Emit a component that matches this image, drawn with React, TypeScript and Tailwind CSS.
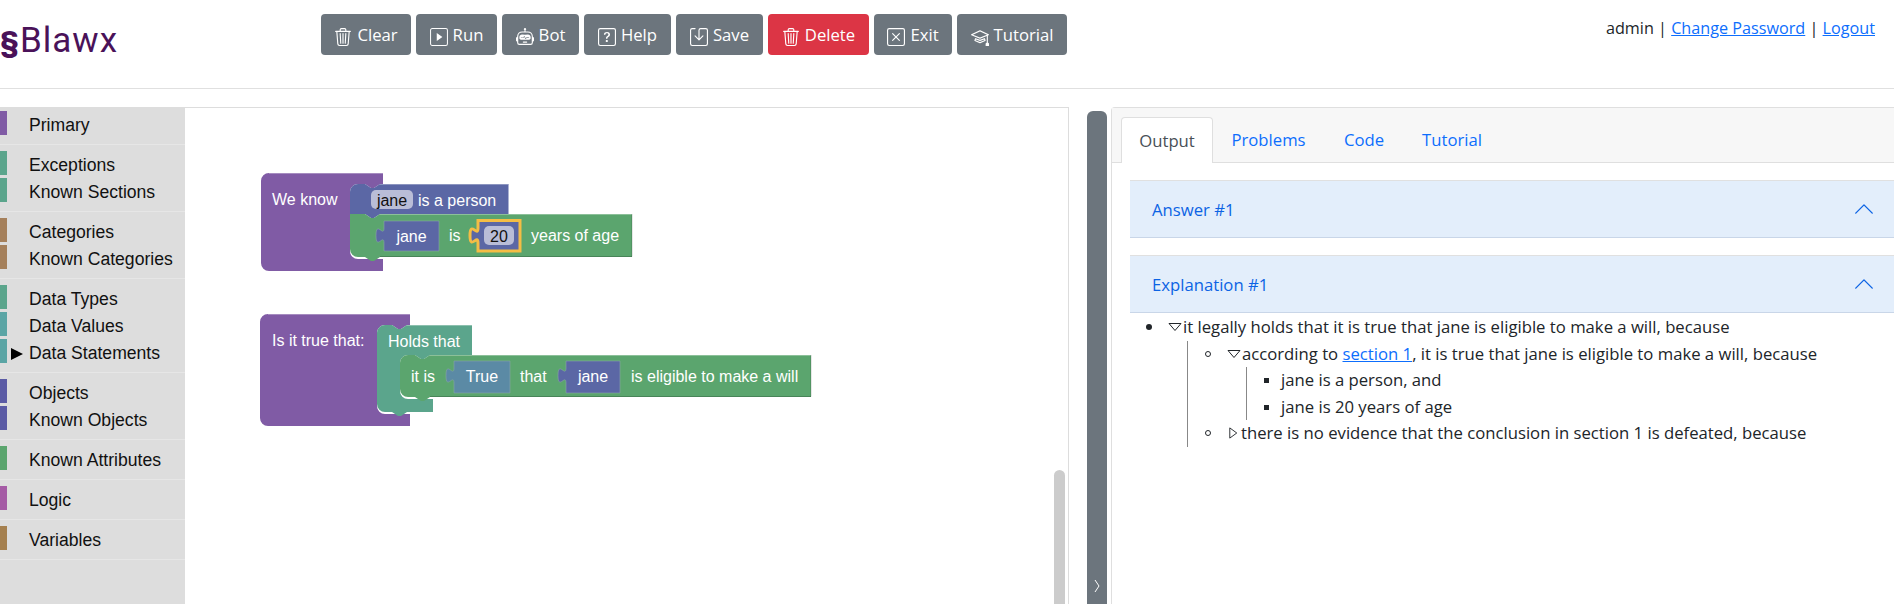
import { BsChevronUp, BsMortarboard, BsQuestionSquare, BsRobot, BsSave, BsTrash3, BsXSquare } from 'react-icons/bs';
import type { ReactNode } from 'react';

function RunIcon() {
  return (
    <svg viewBox="0 0 16 16" className="h-[18px] w-[18px]" fill="none">
      <rect x="0.5" y="0.5" width="15" height="15" rx="1.5" stroke="currentColor" strokeWidth="0.9" />
      <path d="M6 4.5 11 8 6 11.5z" fill="currentColor" />
    </svg>
  );
}

const buttons = [
  { label: 'Clear', icon: <BsTrash3 size={18} />, cls: 'w-[90px] bg-[#6c757d]' },
  { label: 'Run', icon: <RunIcon />, cls: 'w-[81px] bg-[#6c757d]' },
  { label: 'Bot', icon: <BsRobot size={18} />, cls: 'w-[77px] bg-[#6c757d]' },
  { label: 'Help', icon: <BsQuestionSquare size={18} />, cls: 'w-[87px] bg-[#6c757d]' },
  { label: 'Save', icon: <BsSave size={18} />, cls: 'w-[87px] bg-[#6c757d]' },
  { label: 'Delete', icon: <BsTrash3 size={18} />, cls: 'w-[101px] bg-[#dc3545]' },
  { label: 'Exit', icon: <BsXSquare size={18} />, cls: 'w-[78px] bg-[#6c757d]' },
  { label: 'Tutorial', icon: <BsMortarboard size={18} />, cls: 'w-[110px] bg-[#6c757d]' },
];

const toolbox = [
  [{ name: 'Primary', color: 'bg-[#805ba5]' }],
  [
    { name: 'Exceptions', color: 'bg-[#5ba58c]' },
    { name: 'Known Sections', color: 'bg-[#5ba58c]' },
  ],
  [
    { name: 'Categories', color: 'bg-[#a5805b]' },
    { name: 'Known Categories', color: 'bg-[#a5805b]' },
  ],
  [
    { name: 'Data Types', color: 'bg-[#5ba58c]' },
    { name: 'Data Values', color: 'bg-[#5ba5a5]' },
    { name: 'Data Statements', color: 'bg-[#5ba5a5]', selected: true },
  ],
  [
    { name: 'Objects', color: 'bg-[#5b5ba5]' },
    { name: 'Known Objects', color: 'bg-[#5b5ba5]' },
  ],
  [{ name: 'Known Attributes', color: 'bg-[#5ba56e]' }],
  [{ name: 'Logic', color: 'bg-[#a55ba5]' }],
  [{ name: 'Variables', color: 'bg-[#a5804f]' }],
];

function Toolbox() {
  return (
    <div className="w-[185px] shrink-0 bg-[#dddddd] font-['Liberation_Sans',sans-serif] text-[17.6px] text-[#111]">
      {toolbox.map((group, i) => (
        <div key={i} className={`flex flex-col gap-[3px] border-b border-[#e6e6e6] pb-[9px] ${i === 0 ? 'pt-[4px]' : 'pt-[6px]'}`}>
          {group.map((item) => (
            <div key={item.name} className="flex h-[24px] items-center">
              <div className={`h-full w-[7px] ${item.color}`} />
              <div className="flex w-[22px] justify-end pr-[6px]">
                {'selected' in item && (
                  <svg viewBox="0 0 12 12" className="mt-[5px] h-3 w-3 fill-black">
                    <path d="M0 0 12 6 0 12z" />
                  </svg>
                )}
              </div>
              <span className="mt-[5px] whitespace-nowrap">{item.name}</span>
            </div>
          ))}
        </div>
      ))}
    </div>
  );
}

const textCls = "font-['Liberation_Sans',sans-serif] text-[16px] fill-white";

// value block with the puzzle tab on its left side
function ValueBlock({ x, y, w, h, fill, label }: { x: number; y: number; w: number; h: number; fill: string; label: string }) {
  return (
    <g>
      <path
        d={`M${x},${y} H${x + w} V${y + h} H${x} V${y + 22} c0,-10 -8,8 -8,-7.5 s8,2.5 8,-7.5 z`}
        fill={fill}
        stroke="#8aa3a8"
        strokeOpacity="0.6"
      />
      <text x={x + w / 2} y={y + 21} textAnchor="middle" className={textCls}>
        {label}
      </text>
    </g>
  );
}

function Edge({ d, light }: { d: string; light?: boolean }) {
  return <path d={d} fill="none" stroke={light ? '#ffffff' : '#000000'} strokeOpacity={light ? 0.3 : 0.2} />;
}

function Workspace() {
  return (
    <div className="relative h-full w-[884px] shrink-0 border-r border-t border-[#dddddd] bg-white">
      <svg viewBox="185 108 883 496" className="h-[496px] w-[883px]">
        {/* We know */}
        <path
          d="M269,173 H383 V184 H380 l-6,4 -3,0 -6,-4 H358 a8,8 0 0 0 -8,8 V251 a8,8 0 0 0 8,8 H383 V271 H269 a8,8 0 0 1 -8,-8 V181 a8,8 0 0 1 8,-8 z"
          fill="#805ba5"
        />
        <Edge light d="M269,173.5 H383" />
        <text x="272" y="205" className={textCls}>We know</text>
        <path
          d="M350,192 a8,8 0 0 1 8,-8 H365 l6,4 3,0 6,-4 H508.5 V214 H380 l-6,4 -3,0 -6,-4 H350 z"
          fill="#5b67a5"
        />
        <Edge light d="M380,184.5 H508" />
        <rect x="371" y="190" width="42" height="19" rx="5" fill="#b9bdd7" />
        <text x="392" y="206" textAnchor="middle" className="font-['Liberation_Sans',sans-serif] text-[16px] fill-[#111]">jane</text>
        <text x="418" y="206" className={textCls}>is a person</text>
        <path
          d="M350,214 H365 l6,4 3,0 6,-4 H632 V257 H380 l-6,4 -3,0 -6,-4 H358 a8,8 0 0 1 -8,-8 z"
          fill="#5ba56e"
        />
        <Edge light d="M380,214.5 H632" />
        <Edge d="M380,256.5 H632 V214" />
        <ValueBlock x={384} y={221} w={55} h={30} fill="#5b67a5" label="jane" />
        <text x="449" y="241" className={textCls}>is</text>
        <path
          d="M478,220.5 H520 V251 H478 V243 c0,-10 -8,8 -8,-7.5 s8,2.5 8,-7.5 z"
          fill="#5b67a5"
          stroke="#f4bd45"
          strokeWidth="3"
        />
        <rect x="484" y="226" width="30" height="19" rx="5" fill="#b9bdd7" />
        <text x="499" y="242" textAnchor="middle" className="font-['Liberation_Sans',sans-serif] text-[16px] fill-[#111]">20</text>
        <text x="531" y="241" className={textCls}>years of age</text>

        {/* Is it true that */}
        <path
          d="M268,314 H410 V325 H407 l-6,4 -3,0 -6,-4 H385 a8,8 0 0 0 -8,8 V406 a8,8 0 0 0 8,8 H410 V426 H268 a8,8 0 0 1 -8,-8 V322 a8,8 0 0 1 8,-8 z"
          fill="#805ba5"
        />
        <Edge light d="M268,314.5 H410" />
        <text x="272" y="346" className={textCls}>Is it true that:</text>
        <path
          d="M377,333 a8,8 0 0 1 8,-8 H392 l6,4 3,0 6,-4 H472 V355 H430 l-6,4 -3,0 -6,-4 H408 a8,8 0 0 0 -8,8 V391 a8,8 0 0 0 8,8 H433 V412 H407 l-6,4 -3,0 -6,-4 H385 a8,8 0 0 1 -8,-8 z"
          fill="#5ba58c"
        />
        <Edge light d="M407,325.5 H472" />
        <text x="388" y="347" className={textCls}>Holds that</text>
        <path
          d="M400,363 a8,8 0 0 1 8,-8 H415 l6,4 3,0 6,-4 H811 V397 H430 l-6,4 -3,0 -6,-4 H408 a8,8 0 0 1 -8,-8 z"
          fill="#5ba56e"
        />
        <Edge light d="M430,355.5 H811" />
        <Edge d="M430,396.5 H811 V355" />
        <text x="411" y="382" className={textCls}>it is</text>
        <ValueBlock x={454} y={361} w={56} h={32} fill="#5b8aa5" label="True" />
        <text x="520" y="382" className={textCls}>that</text>
        <ValueBlock x={566} y={361} w={54} h={32} fill="#5b67a5" label="jane" />
        <text x="631" y="382" className={textCls}>is eligible to make a will</text>
      </svg>
      {/* workspace scrollbar */}
      <div className="absolute bottom-0 right-[3px] top-[362px] w-[11px] rounded-t-[6px] bg-[#cccccc]" />
    </div>
  );
}

function Closed() {
  return (
    <svg viewBox="0 0 14 14" className="mr-[1px] inline-block h-[14px] w-[13px] align-[-1px]" fill="none" stroke="currentColor">
      <path d="M3 1.5 10.5 7 3 12.5z" />
    </svg>
  );
}

function Open() {
  return (
    <svg viewBox="0 0 14 14" className="mr-[1px] inline-block h-[14px] w-[14px] align-[-1px]" fill="none" stroke="currentColor">
      <path d="M1 3.5H13L7 10.5z" />
    </svg>
  );
}

function Panel({ title, children }: { title: string; children?: ReactNode }) {
  return (
    <div>
      <div className="flex h-[58px] items-center justify-between border-y border-b-[#c9d6e8] border-t-[#e0e0e0] bg-[#e3eefb] pl-[22px] pr-[24px] text-[#0c63e4]">
        <span className="mt-[2px]">{title}</span>
        <BsChevronUp size={22} />
      </div>
      {children}
    </div>
  );
}

function Explanation() {
  return (
    <ul className="list-none pl-[38px] pt-[1px] leading-[26.5px] text-[#212529]">
      <li className="relative">
        <span className="absolute left-[-22px] top-[10px] h-[6px] w-[6px] rounded-full bg-[#212529]" />
        <Open />it legally holds that it is true that jane is eligible to make a will, because
        <ul className="ml-[19px] list-none border-l border-[#888] pl-[39px]">
          <li className="relative">
            <span className="absolute left-[-22px] top-[10px] h-[6px] w-[6px] rounded-full border border-[#212529]" />
            <Open />according to <a className="text-[#0d6efd] underline">section 1</a>, it is true that jane is eligible to make a will, because
            <ul className="ml-[19px] list-none border-l border-[#888] pl-[34px]">
              <li className="relative">
                <span className="absolute left-[-17px] top-[11px] h-[5px] w-[5px] bg-[#212529]" />
                jane is a person, and
              </li>
              <li className="relative">
                <span className="absolute left-[-17px] top-[11px] h-[5px] w-[5px] bg-[#212529]" />
                jane is 20 years of age
              </li>
            </ul>
          </li>
          <li className="relative">
            <span className="absolute left-[-22px] top-[10px] h-[6px] w-[6px] rounded-full border border-[#212529]" />
            <Closed />there is no evidence that the conclusion in section 1 is defeated, because
          </li>
        </ul>
      </li>
    </ul>
  );
}

function OutputCard() {
  return (
    <div className="ml-[4px] w-[800px] shrink-0 rounded-t-[4px] border border-b-0 border-[#dfdfdf] bg-white">
      <div className="flex h-[55px] items-end gap-0 border-b border-[#dfdfdf] bg-[#f7f7f7] pl-[9px] text-[#0d6efd]">
        <div className="mb-[-1px] flex h-[46px] w-[92px] items-center justify-center rounded-t-[4px] border border-b-0 border-[#dfdfdf] bg-white pt-[1px] text-[#495057]">Output</div>
        <div className="flex h-[45px] w-[111px] items-center justify-center pt-[1px]">Problems</div>
        <div className="flex h-[45px] w-[80px] items-center justify-center pt-[1px]">Code</div>
        <div className="flex h-[45px] w-[96px] items-center justify-center pt-[1px]">Tutorial</div>
      </div>
      <div className="flex flex-col gap-[17px] pl-[18px] pr-[11px] pt-[17px]">
        <Panel title="Answer #1" />
        <Panel title="Explanation #1">
          <Explanation />
        </Panel>
      </div>
    </div>
  );
}

export default function App() {
  return (
    <div className="h-[604px] w-[1894px] overflow-hidden bg-white font-['Open_Sans',sans-serif] text-[16.7px] text-[#212529]">
      <header className="flex h-[89px] border-b border-[#e0e0e0]">
        <div className="flex w-[321px] shrink-0 items-baseline pt-[21px] font-['Roboto',sans-serif] text-[35px] leading-[40px] tracking-[1px] text-[#4a1259]">
          <span className="w-[20px] text-[30px] font-black">§</span>
          <span>Blawx</span>
        </div>
        <div className="flex items-start gap-[5px] pt-[14px]">
          {buttons.map((b) => (
            <button key={b.label} className={`flex h-[41px] items-center justify-center gap-[5px] rounded-[4px] text-white ${b.cls}`}>
              <span className="mt-[5px]">{b.icon}</span>
              <span>{b.label}</span>
            </button>
          ))}
        </div>
        <div className="ml-auto pr-[19px] pt-[16px] text-[16.2px]">
          admin | <a className="text-[#0d6efd] underline">Change Password</a> | <a className="text-[#0d6efd] underline">Logout</a>
        </div>
      </header>
      <div className="mt-[18px] flex h-[497px]">
        <Toolbox />
        <Workspace />
        <div className="ml-[18px] mt-[4px] flex h-[493px] w-[20px] shrink-0 flex-col justify-end rounded-t-[6px] bg-[#6c757d] pb-[11px] text-white">
          <svg viewBox="0 0 6 14" className="mx-auto h-[14px] w-[6px]" fill="none" stroke="currentColor">
            <path d="M1 1 5 7 1 13" />
          </svg>
        </div>
        <OutputCard />
      </div>
    </div>
  );
}
